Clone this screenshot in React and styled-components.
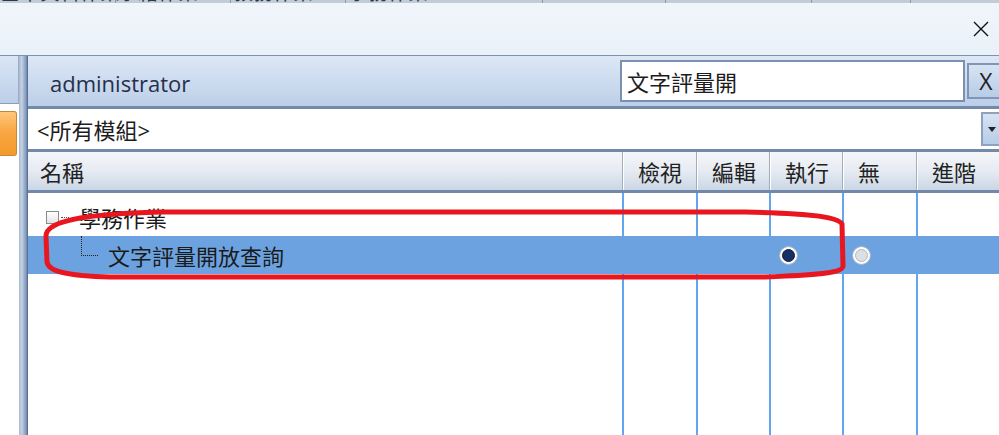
import React from "react";
import styled, { createGlobalStyle } from "styled-components";

const GlobalStyle = createGlobalStyle`
  html, body {
    margin: 0;
    padding: 0;
    background: #fff;
  }
  body {
    font-family: "Open Sans", "Noto Sans CJK TC", sans-serif;
    overflow: hidden;
  }
  * {
    box-sizing: border-box;
  }
`;

const COLS = "594px 74px 73px 73px 74px 1fr";

const Window = styled.div`
  position: relative;
  width: 999px;
  height: 435px;
  display: flex;
  flex-direction: column;
  overflow: hidden;
  background: #fff;
`;

const MenuStrip = styled.div`
  height: 3px;
  flex: none;
  display: flex;
  overflow: hidden;
  background: #c2cbd8;
`;

const MenuItem = styled.span`
  width: ${(p) => p.$w}px;
  flex: none;
  padding-left: ${(p) => p.$pad || 0}px;
  margin-top: -17px;
  font-size: 20px;
  line-height: 20px;
  color: #2b3850;
  white-space: nowrap;
  border-right: 1px solid #8d99ab;
`;

const TitleBar = styled.div`
  height: 53px;
  flex: none;
  display: flex;
  align-items: center;
  justify-content: flex-end;
  padding-right: 10px;
  background: linear-gradient(#f0f5fa, #e9f1f9);
  border-bottom: 1px solid #7f92b1;
`;

const Body = styled.div`
  flex: 1;
  display: flex;
  min-height: 0;
`;

const LeftRail = styled.div`
  width: 19px;
  flex: none;
  display: flex;
  flex-direction: column;
  background: #fff;
`;

const RailHead = styled.div`
  height: 48px;
  background: linear-gradient(#dae6f5, #bccfe8);
  border-bottom: 1px solid #8c9db7;
  border-right: 1px solid #9aabc4;
`;

const OrangeTab = styled.div`
  width: 17px;
  height: 45px;
  margin-top: 7px;
  border: 1px solid #c08a3c;
  border-left: none;
  border-radius: 0 3px 3px 0;
  background: linear-gradient(#ffc77a, #f8a742 45%, #f59a2c);
`;

const Splitter = styled.div`
  width: 9px;
  flex: none;
  background: linear-gradient(
    to right,
    #a7b8cf 0,
    #c5d2e3 30%,
    #a2b5cf 55%,
    #7f97b9 80%,
    #4a628a 100%
  );
`;

const Main = styled.div`
  flex: 1;
  display: flex;
  flex-direction: column;
  min-width: 0;
`;

const PanelHeader = styled.div`
  height: 53px;
  flex: none;
  display: flex;
  align-items: center;
  padding-left: 22px;
  background: linear-gradient(#dde8f5, #bccfe9);
  border-bottom: 3px solid #7389aa;
`;

const UserName = styled.div`
  flex: 1;
  font-size: 22px;
  color: #26304a;
  padding-top: 3px;
`;

const SearchBox = styled.div`
  width: 345px;
  height: 42px;
  display: flex;
  align-items: center;
  padding-left: 5px;
  background: #fff;
  border: 2px solid #7b8fb0;
  font-size: 22px;
  color: #1c1c1c;
`;

const ClearButton = styled.div`
  width: 32px;
  height: 36px;
  margin-left: 2px;
  display: flex;
  align-items: center;
  justify-content: center;
  padding-left: 4px;
  background: linear-gradient(#d6e3f3, #b8cce7);
  border: 2px solid #8196b6;
  border-right: none;
  font-size: 23px;
  color: #222;
`;

const ModuleRow = styled.div`
  height: 43px;
  flex: none;
  display: flex;
  align-items: center;
  padding-left: 9px;
  background: #fff;
  border-bottom: 3px solid #7389aa;
  font-size: 22px;
  color: #1c1c1c;
`;

const ModuleName = styled.div`
  flex: 1;
`;

const DropButton = styled.div`
  width: 18px;
  height: 34px;
  display: flex;
  align-items: center;
  justify-content: center;
  padding-left: 2px;
  background: linear-gradient(#d6e3f3, #b8cce7);
  border: 2px solid #8ea2c0;
  border-right: none;
`;

const Caret = styled.div`
  width: 0;
  height: 0;
  border-left: 4px solid transparent;
  border-right: 4px solid transparent;
  border-top: 5px solid #222;
`;

const HeaderRow = styled.div`
  height: 41px;
  flex: none;
  display: grid;
  grid-template-columns: ${COLS};
  background: linear-gradient(#f4f6f9, #e6ebf2 50%, #cad6e5);
  border-bottom: 3px solid #7389aa;
`;

const HeaderCell = styled.div`
  display: flex;
  align-items: center;
  padding-left: ${(p) => (p.$first ? 12 : 15)}px;
  border-left: ${(p) => (p.$first ? "none" : "1px solid #9eacc0")};
  box-shadow: ${(p) => (p.$first ? "none" : "inset 1px 0 0 #fff")};
  font-size: 22px;
  color: #222;
`;

const GridBody = styled.div`
  flex: 1;
  display: grid;
  grid-template-columns: ${COLS};
  grid-template-rows: 5px 38px 38px 1fr;
`;

const ColumnRule = styled.div`
  grid-column: ${(p) => p.$col};
  grid-row: 1 / -1;
  border-left: 2px solid #62a6f2;
`;

const TreeRow = styled.div`
  grid-column: 1 / -1;
  grid-row: ${(p) => p.$row};
  z-index: 1;
  display: grid;
  grid-template-columns: ${COLS};
  background: ${(p) => (p.$selected ? "#6ca2df" : "transparent")};
`;

const NameCell = styled.div`
  display: flex;
  align-items: center;
  padding-left: ${(p) => p.$indent}px;
  font-size: 22px;
  color: #1a1a1a;
`;

const Expander = styled.div`
  width: 13px;
  height: 13px;
  flex: none;
  border: 1px solid #8a8a8a;
  background: linear-gradient(#fff, #e4e4e4);
`;

const DotLink = styled.div`
  width: 8px;
  flex: none;
  margin: 0 10px 0 2px;
  border-top: 1px dotted #555;
`;

const Elbow = styled.div`
  width: 17px;
  height: 38px;
  flex: none;
  margin-right: 10px;
  align-self: flex-start;
`;

const ElbowLine = styled.div`
  width: 17px;
  height: 20px;
  border-left: 1px dotted #222;
  border-bottom: 1px dotted #222;
`;

const RadioCell = styled.div`
  display: flex;
  align-items: center;
  padding-left: 10px;
`;

const Radio = styled.div`
  width: 19px;
  height: 19px;
  border-radius: 50%;
  display: flex;
  align-items: center;
  justify-content: center;
  background: #fdfdfe;
  border: 1px solid #a9b3c0;
  &::after {
    content: "";
    width: 11px;
    height: 11px;
    border-radius: 50%;
    background: ${(p) => (p.$on ? "#182f63" : "#dcdfe3")};
    border: 1px solid ${(p) => (p.$on ? "#0e1d40" : "#b3b9c1")};
  }
`;

const Annotation = styled.svg`
  position: absolute;
  left: 0;
  top: 0;
  pointer-events: none;
  z-index: 5;
`;

function CloseIcon() {
  return (
    <svg width="16" height="16" viewBox="0 0 16 16">
      <path d="M1 1 L15 15 M15 1 L1 15" stroke="#111" strokeWidth="1.4" fill="none" />
    </svg>
  );
}

const menu = [
  { w: 116, pad: 0, t: "基本資料作業" },
  { w: 115, pad: 2, t: "學籍作業" },
  { w: 115, pad: 2, t: "教務作業" },
  { w: 197, pad: 2, t: "學務作業" },
  { w: 123, pad: 0, t: "" },
  { w: 146, pad: 0, t: "" },
  { w: 99, pad: 0, t: "" },
];

export default function App() {
  return (
    <Window>
      <GlobalStyle />
      <MenuStrip>
        {menu.map((m, i) => (
          <MenuItem key={i} $w={m.w} $pad={m.pad}>
            {m.t}
          </MenuItem>
        ))}
      </MenuStrip>
      <TitleBar>
        <CloseIcon />
      </TitleBar>
      <Body>
        <LeftRail>
          <RailHead />
          <OrangeTab />
        </LeftRail>
        <Splitter />
        <Main>
          <PanelHeader>
            <UserName>administrator</UserName>
            <SearchBox>文字評量開</SearchBox>
            <ClearButton>X</ClearButton>
          </PanelHeader>
          <ModuleRow>
            <ModuleName>&lt;所有模組&gt;</ModuleName>
            <DropButton>
              <Caret />
            </DropButton>
          </ModuleRow>
          <HeaderRow>
            <HeaderCell $first>名稱</HeaderCell>
            <HeaderCell>檢視</HeaderCell>
            <HeaderCell>編輯</HeaderCell>
            <HeaderCell>執行</HeaderCell>
            <HeaderCell>無</HeaderCell>
            <HeaderCell>進階</HeaderCell>
          </HeaderRow>
          <GridBody>
            {[2, 3, 4, 5, 6].map((c) => (
              <ColumnRule key={c} $col={c} />
            ))}
            <TreeRow $row={2}>
              <NameCell $indent={18}>
                <Expander />
                <DotLink />
                學務作業
              </NameCell>
            </TreeRow>
            <TreeRow $row={3} $selected>
              <NameCell $indent={53}>
                <Elbow>
                  <ElbowLine />
                </Elbow>
                文字評量開放查詢
              </NameCell>
              <div />
              <div />
              <RadioCell>
                <Radio $on />
              </RadioCell>
              <RadioCell>
                <Radio />
              </RadioCell>
              <div />
            </TreeRow>
          </GridBody>
        </Main>
      </Body>
      <Annotation width="999" height="435" viewBox="0 0 999 435">
        <path
          d="M160 212 L745 212 C800 213 838 216 842 224 L843 266 C843 273 820 275 765 277 L110 277 C70 276 48 272 47 262 L46 236 C46 222 80 214 160 212 Z"
          fill="none"
          stroke="#e8161e"
          strokeWidth="5"
        />
      </Annotation>
    </Window>
  );
}
